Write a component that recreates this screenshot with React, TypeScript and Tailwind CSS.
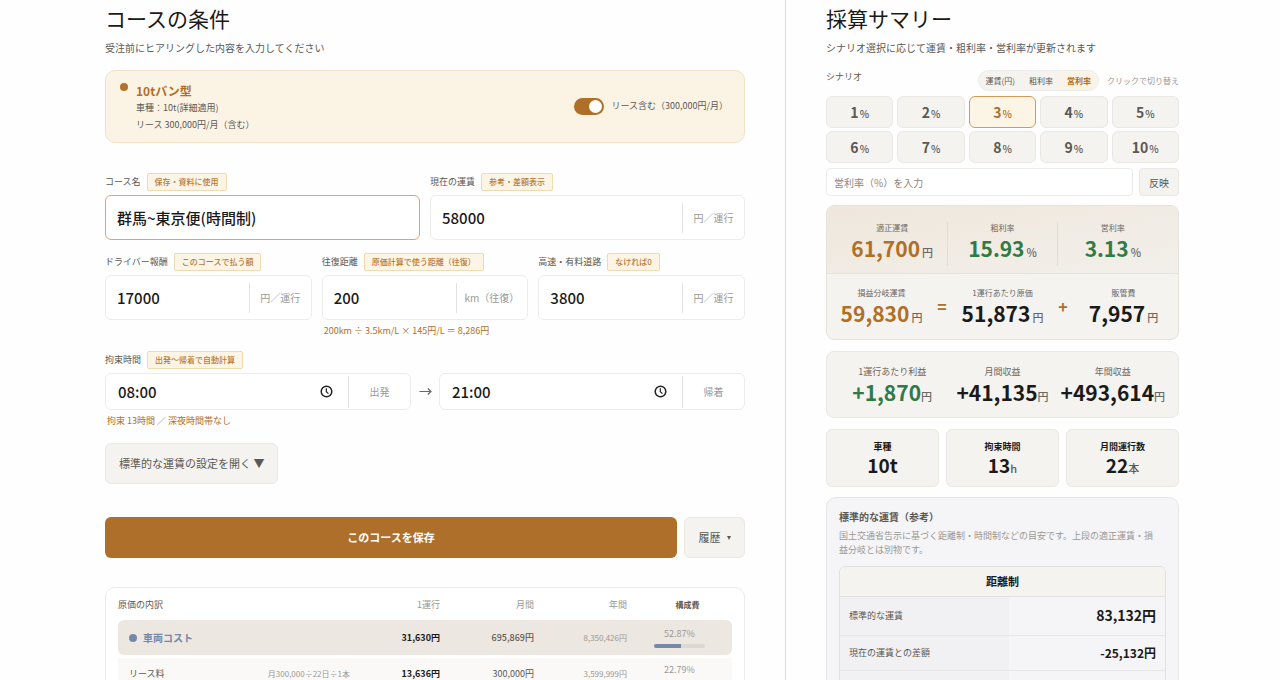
import React from "react";

type FieldProps = {
  id: string;
  label: string;
  badge: string;
  value: string;
  unit?: string;
  hint?: string;
  active?: boolean;
};

const Badge = ({ text }: { text: string }) => (
  <span className="h-[18px] px-[7px] flex items-center rounded-xs border border-[#f0dab0] bg-[#fcf5e6] text-[8px] leading-4 font-medium text-[#b87a33]">
    {text}
  </span>
);

const Field = ({ id, label, badge, value, unit, hint, active }: FieldProps) => (
  <div className="min-w-0">
    <div className="flex items-center gap-1.5 mb-1">
      <label htmlFor={id} className="text-[9px] leading-4 text-[#5c5853]">
        {label}
      </label>
      <Badge text={badge} />
    </div>
    <div
      className={
        active
          ? "flex items-center h-[45px] rounded-md border border-[#d3a878] bg-white"
          : "flex items-center h-[45px] rounded-md border border-[#ececea] bg-white"
      }
    >
      <input
        id={id}
        defaultValue={value}
        className="flex-1 min-w-0 h-full pl-[11px] bg-transparent outline-none text-[15px] font-medium text-[#1a1a1a]"
      />
      {unit && (
        <span className="h-[30px] min-w-[62px] px-2 flex items-center justify-center border-l border-[#e2e2e0] text-[10px] text-[#9b9894]">
          {unit}
        </span>
      )}
    </div>
    {hint && <p className="mt-[3px] ml-0.5 text-[9px] leading-4 text-[#b06f26]">{hint}</p>}
  </div>
);

const ClockIcon = () => (
  <svg width="13" height="13" viewBox="0 0 13 13" fill="none" stroke="#222" strokeWidth="1.5">
    <circle cx="6.5" cy="6.5" r="5.3" />
    <path d="M6.3 3.2V6.8L8.5 8.6" strokeWidth="1.2" />
  </svg>
);

const TimeField = ({ label, value }: { label: string; value: string }) => (
  <label className="flex-1 min-w-0 flex items-center h-[37px] rounded-md border border-[#ececea] bg-white">
    <input
      defaultValue={value}
      className="flex-1 min-w-0 h-full pl-3 bg-transparent outline-none text-[15px] font-medium text-[#1a1a1a]"
    />
    <ClockIcon />
    <span className="ml-[15px] h-8 w-[62px] flex items-center justify-center border-l border-[#e2e2e0] text-[10px] text-[#9b9894]">
      {label}
    </span>
  </label>
);

type MetricProps = {
  label: string;
  value: string;
  unit: string;
  color: string;
  labelClass?: string;
  unitClass?: string;
};

const Metric = ({ label, value, unit, color, labelClass = "text-[8px]", unitClass = "ml-0.5" }: MetricProps) => (
  <div className="flex flex-col items-center whitespace-nowrap">
    <p className={`${labelClass} leading-3 text-[#6b6762]`}>{label}</p>
    <p className={`text-[21px] leading-7 font-bold ${color}`}>
      {value}
      <span className={`${unitClass} text-[11px] font-medium text-[#6b6762]`}>{unit}</span>
    </p>
  </div>
);

const rates = [1, 2, 3, 4, 5, 6, 7, 8, 9, 10];

const stats = [
  { label: "車種", value: "10t", unit: "" },
  { label: "拘束時間", value: "13", unit: "h" },
  { label: "月間運行数", value: "22", unit: "本" },
];

const Ratio = ({ percent, bar }: { percent: number; bar: string }) => (
  <div className="w-[51px] mx-auto">
    <p className="text-[9px] leading-3 text-center text-[#9b9894]">{percent}%</p>
    <div className="mt-1 h-1 rounded-xs bg-[#dcd8d3] overflow-hidden">
      <div className={`h-full ${bar}`} style={{ width: `${percent}%` }} />
    </div>
  </div>
);

const CourseForm = () => {
  return (
    <main className="flex-1 min-w-0 pl-[105px] pr-10 pt-1">
      <h1 className="text-[21px] leading-7 text-[#1a1a1a]">コースの条件</h1>
      <p className="mt-2 text-[10px] leading-4 text-[#5c5853]">
        受注前にヒアリングした内容を入力してください
      </p>

      <section className="mt-[14px] pt-3 pb-[9px] pl-[14px] pr-4 flex items-center rounded-[10px] border border-[#f0e2c6] bg-[#fbf4e5]">
        <span className="self-start size-2 rounded-full bg-[#b5722a]" />
        <div className="ml-2 flex-1">
          <h2 className="text-[12px] leading-4 font-bold text-[#b06f26]">10tバン型</h2>
          <p className="text-[9px] leading-[17px] text-[#5c5853]">車種：10t(詳細適用)</p>
          <p className="text-[9px] leading-[17px] text-[#5c5853]">リース 300,000円/月（含む）</p>
        </div>
        <label className="mb-1 flex items-center text-[9px] leading-4 text-[#5c5853]">
          <input type="checkbox" defaultChecked className="peer sr-only" />
          <span className="mr-[7px] w-[30px] h-[17px] p-0.5 flex justify-end rounded-full bg-[#b06f26]">
            <span className="size-[13px] rounded-full bg-white" />
          </span>
          リース含む（300,000円/月）
        </label>
      </section>

      <div className="mt-[30px] grid grid-cols-2 gap-[10px]">
        <Field id="course" label="コース名" badge="保存・資料に使用" value="群馬~東京便(時間制)" active />
        <Field id="fare" label="現在の運賃" badge="参考・差額表示" value="58000" unit="円／運行" />
      </div>
      <div className="mt-[13px] grid grid-cols-3 gap-[10px]">
        <Field id="driver" label="ドライバー報酬" badge="このコースで払う額" value="17000" unit="円／運行" />
        <Field
          id="distance"
          label="往復距離"
          badge="原価計算で使う距離（往復）"
          value="200"
          unit="km（往復）"
          hint="200km ÷ 3.5km/L × 145円/L ＝ 8,286円"
        />
        <Field id="toll" label="高速・有料道路" badge="なければ0" value="3800" unit="円／運行" />
      </div>

      <div className="mt-3 flex items-center gap-1.5">
        <span className="text-[9px] leading-4 text-[#5c5853]">拘束時間</span>
        <Badge text="出発〜帰着で自動計算" />
      </div>
      <div className="mt-1 flex items-center">
        <TimeField label="出発" value="08:00" />
        <span className="w-7 flex justify-center">
          <svg width="13" height="9" viewBox="0 0 13 9" fill="none" stroke="#6b6762" strokeWidth="1.2">
            <path d="M0.5 4.5H12M8.8 1.5L12 4.5L8.8 7.5" />
          </svg>
        </span>
        <TimeField label="帰着" value="21:00" />
      </div>
      <p className="mt-[3px] ml-0.5 text-[9px] leading-4 text-[#b06f26]">拘束 13時間 ／ 深夜時間帯なし</p>

      <button className="mt-[14px] h-[41px] px-[13px] rounded-md border border-[#e9e8e5] bg-[#f4f3f0] text-[11px] text-[#5c5853]">
        標準的な運賃の設定を開く ▼
      </button>

      <div className="mt-[33px] flex gap-[7px]">
        <button className="flex-1 h-[41px] rounded-md bg-[#ad6f29] text-[11px] font-bold text-white">
          このコースを保存
        </button>
        <button className="w-[61px] h-[41px] flex items-center justify-center gap-1.5 rounded-md border border-[#e9e8e5] bg-[#f4f3f0] text-[11px] text-[#5c5853]">
          履歴
          <svg width="4" height="4" viewBox="0 0 4 4" fill="#5c5853">
            <path d="M0 0H4L2 4Z" />
          </svg>
        </button>
      </div>

      <section className="mt-[29px] pt-0.5 px-3 pb-6 rounded-[10px] border border-[#ececea] bg-white">
        <table className="w-full table-fixed border-separate border-spacing-x-0 border-spacing-y-[3px] text-right text-[9px] leading-4">
          <colgroup>
            <col />
            <col className="w-[132px]" />
            <col className="w-[90px]" />
            <col className="w-[94px]" />
            <col className="w-[93px]" />
            <col className="w-[105px]" />
          </colgroup>
          <thead>
            <tr className="h-6 text-[#9b9894]">
              <th colSpan={2} className="text-left font-normal text-[#5c5853]">原価の内訳</th>
              <th className="font-normal">1運行</th>
              <th className="font-normal">月間</th>
              <th className="font-normal">年間</th>
              <th className="pl-4 text-center text-[8px] font-bold text-[#5c5853]">構成費</th>
            </tr>
          </thead>
          <tbody>
            <tr className="h-[35px] bg-[#ece7e1]">
              <td colSpan={2} className="pl-[11px] rounded-l-md">
                <span className="flex items-center gap-1.5 text-[10px] font-bold text-[#7688a8]">
                  <span className="size-2 rounded-full bg-[#7688a8]" />
                  車両コスト
                </span>
              </td>
              <td className="font-bold text-[#1a1a1a]">31,630円</td>
              <td className="font-medium text-[#5c5853]">695,869円</td>
              <td className="text-[8px] text-[#9b9894]">8,350,426円</td>
              <td className="rounded-r-md">
                <Ratio percent={52.87} bar="bg-[#7688a8]" />
              </td>
            </tr>
            <tr className="h-8 bg-[#faf9f7]">
              <td className="pl-[11px] text-left text-[#5c5853]">リース料</td>
              <td className="text-[8px] text-[#9b9894]">月300,000÷22日÷1本</td>
              <td className="font-bold text-[#1a1a1a]">13,636円</td>
              <td className="text-[#5c5853]">300,000円</td>
              <td className="text-[8px] text-[#9b9894]">3,599,999円</td>
              <td>
                <Ratio percent={22.79} bar="bg-[#a3a09b]" />
              </td>
            </tr>
          </tbody>
        </table>
      </section>
    </main>
  );
};

const Summary = () => {
  return (
    <aside className="w-[495px] shrink-0 pl-10 pr-[101px] pt-1 border-l border-[#dededd]">
      <h1 className="text-[21px] leading-7 text-[#1a1a1a]">採算サマリー</h1>
      <p className="mt-2 text-[10px] leading-4 text-[#5c5853]">
        シナリオ選択に応じて運賃・粗利率・営利率が更新されます
      </p>

      <div className="mt-[14px] flex items-start text-[8px]">
        <span className="text-[9px] leading-[14px] text-[#5c5853]">シナリオ</span>
        <div className="ml-auto h-[21px] flex rounded-full border border-[#ececea] bg-[#f4f3f0] text-[#5c5853] overflow-hidden">
          <button className="px-[7px]">運賃(円)</button>
          <button className="px-[7px]">粗利率</button>
          <button className="px-[7px] bg-[#fbf4e5] font-bold text-[#b06f26]">営利率</button>
        </div>
        <span className="ml-2 leading-[21px] text-[#9b9894]">クリックで切り替え</span>
      </div>

      <div className="mt-[5px] grid grid-cols-5 gap-x-1 gap-y-[3px]">
        {rates.map((rate) => (
          <button
            key={rate}
            className={
              rate === 3
                ? "h-8 rounded-md border border-[#cf9a5c] bg-[#fcf5e6] text-[14px] font-bold text-[#b06f26]"
                : "h-8 rounded-md border border-[#e9e8e5] bg-[#f4f3f0] text-[14px] font-bold text-[#5c5853]"
            }
          >
            {rate}
            <span className="ml-px text-[10px] font-medium">%</span>
          </button>
        ))}
      </div>

      <div className="mt-[5px] flex gap-1.5">
        <input
          aria-label="営利率"
          placeholder="営利率（%）を入力"
          className="flex-1 min-w-0 h-7 px-[7px] rounded-sm border border-[#ececea] bg-white outline-none text-[10px] placeholder:text-[#8a8782]"
        />
        <button className="w-10 h-7 rounded-sm border border-[#e9e8e5] bg-[#f4f3f0] text-[10px] text-[#5c5853]">
          反映
        </button>
      </div>

      <section className="mt-[9px] rounded-lg border border-[#e6e3dd] bg-[#f4f3f0] overflow-hidden">
        <div className="h-[68px] px-[10px] pt-2 grid grid-cols-3 items-center border-b border-[#e6e3dd] bg-linear-to-br from-[#efe7dc] to-[#f2efea]">
          <Metric label="適正運賃" value="61,700" unit="円" color="text-[#b06f26]" />
          <div className="border-x border-[#e3dcd2]">
            <Metric label="粗利率" value="15.93" unit="%" color="text-[#2f7a45]" />
          </div>
          <Metric label="営利率" value="3.13" unit="%" color="text-[#2f7a45]" />
        </div>
        <div className="h-[65px] pt-1 grid grid-cols-[1fr_12px_1fr_12px_1fr] items-center">
          <Metric label="損益分岐運賃" value="59,830" unit="円" color="text-[#b06f26]" />
          <span className="pb-1.5 text-center text-[16px] font-bold text-[#b06f26]">=</span>
          <Metric label="1運行あたり原価" value="51,873" unit="円" color="text-[#1a1a1a]" />
          <span className="pb-1.5 text-center text-[16px] font-bold text-[#b06f26]">+</span>
          <Metric label="販管費" value="7,957" unit="円" color="text-[#1a1a1a]" />
        </div>
      </section>

      <section className="mt-[11px] h-[67px] px-[10px] pt-1.5 grid grid-cols-3 items-center rounded-lg border border-[#e9e8e5] bg-[#f4f3f0]">
        <Metric label="1運行あたり利益" value="+1,870" unit="円" color="text-[#2f7a45]" labelClass="text-[9px]" unitClass="ml-0" />
        <Metric label="月間収益" value="+41,135" unit="円" color="text-[#1a1a1a]" labelClass="text-[9px]" unitClass="ml-0" />
        <Metric label="年間収益" value="+493,614" unit="円" color="text-[#1a1a1a]" labelClass="text-[9px]" unitClass="ml-0" />
      </section>

      <div className="mt-[11px] grid grid-cols-3 gap-[7px]">
        {stats.map((stat) => (
          <div
            key={stat.label}
            className="h-[58px] pt-[5px] flex flex-col items-center justify-center rounded-md border border-[#e9e8e5] bg-[#f4f3f0] text-[#1a1a1a]"
          >
            <p className="text-[9px] leading-3 font-bold">{stat.label}</p>
            <p className="text-[19px] leading-6 font-bold">
              {stat.value}
              <span className="text-[11px] font-medium text-[#5c5853]">{stat.unit}</span>
            </p>
          </div>
        ))}
      </div>

      <section className="mt-[10px] px-3 pt-[11px] pb-4 rounded-[10px] border border-[#e6e6e8] bg-[#f5f5f7]">
        <h2 className="text-[10px] leading-4 font-bold text-[#5c5853]">標準的な運賃（参考）</h2>
        <p className="mt-1 pr-2 text-[9px] leading-[14px] text-[#9b9894]">
          国土交通省告示に基づく距離制・時間制などの目安です。上段の適正運賃・損益分岐とは別物です。
        </p>
        <div className="mt-[9px] rounded-md border border-[#e2e1dd] overflow-hidden">
          <table className="w-full table-fixed text-[#1a1a1a]">
            <colgroup>
              <col className="w-[52%]" />
              <col />
            </colgroup>
            <thead>
              <tr className="h-[29px] border-b border-[#e2e1dd] bg-[#f4f3ef]">
                <th colSpan={2} className="text-[11px] font-bold">距離制</th>
              </tr>
            </thead>
            <tbody>
              <tr className="h-[39px] border-b border-[#e6e6e8]">
                <th className="pl-[9px] bg-[#f1f1f3] text-left text-[9px] font-normal text-[#5c5853]">標準的な運賃</th>
                <td className="pr-[9px] text-right text-[14px] font-bold">83,132円</td>
              </tr>
              <tr className="h-[35px] border-b border-[#e6e6e8]">
                <th className="pl-[9px] bg-[#f1f1f3] text-left text-[9px] font-normal text-[#5c5853]">現在の運賃との差額</th>
                <td className="pr-[9px] text-right text-[12px] font-bold">-25,132円</td>
              </tr>
              <tr className="h-[35px]">
                <th className="bg-[#f1f1f3]" />
                <td />
              </tr>
            </tbody>
          </table>
        </div>
      </section>
    </aside>
  );
};

const App = () => {
  return (
    <div
      lang="ja"
      className="h-screen overflow-hidden flex bg-[#fefefe] font-['Noto_Sans_CJK_JP',sans-serif]"
    >
      <CourseForm />
      <Summary />
    </div>
  );
};

export default App;
